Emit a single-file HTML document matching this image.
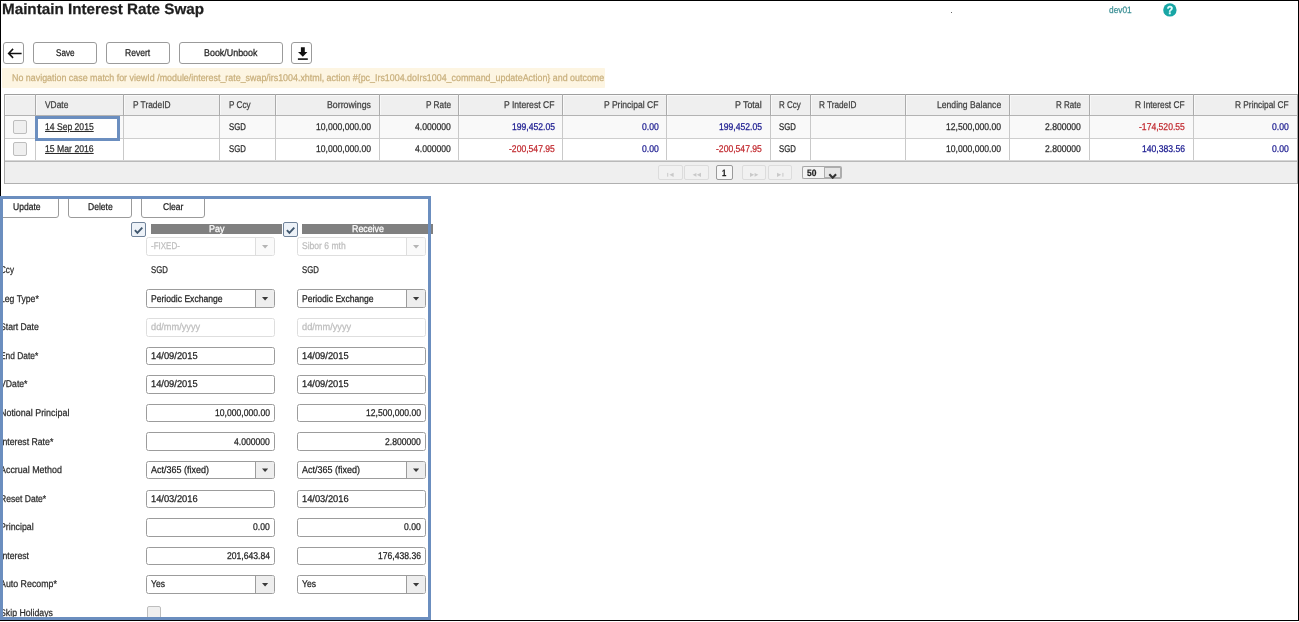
<!DOCTYPE html>
<html lang="en"><head><meta charset="utf-8"><title>Maintain Interest Rate Swap</title>
<style>
html,body{margin:0;padding:0;background:#fff;}
body{width:1299px;height:622px;position:relative;overflow:hidden;font-family:"Liberation Sans",sans-serif;}
h1{margin:0;font-weight:bold;}
#root{position:absolute;left:0;top:0;width:1299px;height:622px;will-change:transform;overflow:hidden;}
.b{position:absolute;display:block;margin:0;padding:0;}
.t{-webkit-text-stroke:0.25px;text-rendering:geometricPrecision;position:absolute;display:block;margin:0;padding:0;white-space:nowrap;transform-origin:0 0;font-family:"Liberation Sans",sans-serif;}
button.btn{border:1px solid #9b9b9b;border-radius:3px;background:#fff;box-sizing:border-box;font-family:"Liberation Sans",sans-serif;overflow:hidden;}
button.btn svg{position:absolute;left:0;top:0;}
.b svg{position:absolute;left:0;top:0;}
svg.b{position:absolute;}
a.t{cursor:pointer;}
</style></head>
<body>
<div id="root">
<header>
<h1 class="t " style="left:2.00px;top:0px;font-size:15px;line-height:20px;color:#1e1e1e;transform:scaleX(1.0140);font-weight:bold;">Maintain Interest Rate Swap</h1>
<span class="t " style="left:1109.00px;top:4px;font-size:9.2px;line-height:12px;color:#3b8f95;transform:scaleX(0.9056);">dev01</span>
<svg class="b" style="left:1163px;top:3px" width="14" height="15" viewBox="0 0 14 15"><circle cx="6.9" cy="6.9" r="6.7" fill="#18a6a5"/><text x="6.9" y="10.9" text-anchor="middle" font-family="Liberation Sans, sans-serif" font-weight="bold" font-size="10.5" fill="#e9ffff" stroke="#e9ffff" stroke-width="0.3">?</text></svg>
<div class="b " style="left:951px;top:12px;width:1px;height:1px;background:#666;"></div>
</header>
<nav>
<button class="b btn" style="left:3px;top:42px;width:21px;height:22px;"><svg width="19" height="20" viewBox="0 0 19 20"><path d="M17.6 10.4H4.8M9.1 5.9L4.6 10.4L9.1 14.9" fill="none" stroke="#111" stroke-width="1.5"/></svg></button>
<button class="b btn" style="left:33px;top:42px;width:64px;height:22px;"><span class="t " style="left:21.80px;top:4px;font-size:9.8px;line-height:13px;color:#222;transform:scaleX(0.8282);">Save</span></button>
<button class="b btn" style="left:106px;top:42px;width:64px;height:22px;"><span class="t " style="left:18.41px;top:4px;font-size:9.8px;line-height:13px;color:#222;transform:scaleX(0.8724);">Revert</span></button>
<button class="b btn" style="left:179px;top:42px;width:104px;height:22px;"><span class="t " style="left:23.70px;top:4px;font-size:9.8px;line-height:13px;color:#222;transform:scaleX(0.9092);">Book/Unbook</span></button>
<button class="b btn" style="left:291px;top:42px;width:21px;height:22px;"><svg width="19" height="20" viewBox="0 0 19 20"><path d="M8.9 4.2h3.9v4.8h2.6L10.85 13.7 6 9h2.9z" fill="#111"/><rect x="5.9" y="15.3" width="9.9" height="1.6" fill="#111"/></svg></button>
</nav>
<div class="b msg" style="left:2px;top:68px;width:603px;height:20px;background:#fdf5e2;border-radius:1px;"></div>
<span class="t " style="left:11.80px;top:72px;font-size:9.8px;line-height:13px;color:#c8af7c;transform:scaleX(0.9069);">No navigation case match for viewId /module/interest_rate_swap/irs1004.xhtml, action #{pc_Irs1004.doIrs1004_command_updateAction} and outcome</span>
<section class="grid">
<div class="b " style="left:4px;top:94px;width:1294px;height:90px;background:#fff;"></div>
<div class="b " style="left:4px;top:94px;width:1294px;height:22px;background:#efefef;"></div>
<div class="b " style="left:4px;top:116px;width:1294px;height:23px;background:#f9f9f9;"></div>
<div class="b " style="left:4px;top:139px;width:1294px;height:22px;background:#fff;"></div>
<div class="b " style="left:38px;top:119px;width:79px;height:19px;background:#fefefe;"></div>
<div class="b " style="left:4px;top:161px;width:1294px;height:23px;background:#efefef;"></div>
<div class="b " style="left:4px;top:94px;width:1294px;height:1px;background:#9f9f9f;"></div>
<div class="b " style="left:5px;top:95px;width:1292px;height:1px;background:#fafafa;"></div>
<div class="b " style="left:4px;top:115px;width:1294px;height:1px;background:#b3b3b3;"></div>
<div class="b " style="left:4px;top:138px;width:1294px;height:1px;background:#cecece;"></div>
<div class="b " style="left:4px;top:160px;width:1294px;height:1px;background:#d6d6d6;"></div>
<div class="b " style="left:4px;top:161px;width:1294px;height:1px;background:#b9b9b9;"></div>
<div class="b " style="left:4px;top:183px;width:1294px;height:1px;background:#b0b0b0;"></div>
<div class="b " style="left:4px;top:94px;width:1px;height:90px;background:#a8a8a8;"></div>
<div class="b " style="left:5px;top:95px;width:1px;height:20px;background:#f8f8f8;"></div>
<div class="b " style="left:35px;top:94px;width:1px;height:22px;background:#ababab;"></div>
<div class="b " style="left:36px;top:95px;width:1px;height:20px;background:#f8f8f8;"></div>
<div class="b " style="left:35px;top:116px;width:1px;height:44px;background:#c9c9c9;"></div>
<div class="b " style="left:123px;top:94px;width:1px;height:22px;background:#ababab;"></div>
<div class="b " style="left:124px;top:95px;width:1px;height:20px;background:#f8f8f8;"></div>
<div class="b " style="left:123px;top:116px;width:1px;height:44px;background:#c9c9c9;"></div>
<div class="b " style="left:219px;top:94px;width:1px;height:22px;background:#ababab;"></div>
<div class="b " style="left:220px;top:95px;width:1px;height:20px;background:#f8f8f8;"></div>
<div class="b " style="left:219px;top:116px;width:1px;height:44px;background:#c9c9c9;"></div>
<div class="b " style="left:275px;top:94px;width:1px;height:22px;background:#ababab;"></div>
<div class="b " style="left:276px;top:95px;width:1px;height:20px;background:#f8f8f8;"></div>
<div class="b " style="left:275px;top:116px;width:1px;height:44px;background:#c9c9c9;"></div>
<div class="b " style="left:379px;top:94px;width:1px;height:22px;background:#ababab;"></div>
<div class="b " style="left:380px;top:95px;width:1px;height:20px;background:#f8f8f8;"></div>
<div class="b " style="left:379px;top:116px;width:1px;height:44px;background:#c9c9c9;"></div>
<div class="b " style="left:458px;top:94px;width:1px;height:22px;background:#ababab;"></div>
<div class="b " style="left:459px;top:95px;width:1px;height:20px;background:#f8f8f8;"></div>
<div class="b " style="left:458px;top:116px;width:1px;height:44px;background:#c9c9c9;"></div>
<div class="b " style="left:562px;top:94px;width:1px;height:22px;background:#ababab;"></div>
<div class="b " style="left:563px;top:95px;width:1px;height:20px;background:#f8f8f8;"></div>
<div class="b " style="left:562px;top:116px;width:1px;height:44px;background:#c9c9c9;"></div>
<div class="b " style="left:666px;top:94px;width:1px;height:22px;background:#ababab;"></div>
<div class="b " style="left:667px;top:95px;width:1px;height:20px;background:#f8f8f8;"></div>
<div class="b " style="left:666px;top:116px;width:1px;height:44px;background:#c9c9c9;"></div>
<div class="b " style="left:770px;top:94px;width:1px;height:22px;background:#ababab;"></div>
<div class="b " style="left:771px;top:95px;width:1px;height:20px;background:#f8f8f8;"></div>
<div class="b " style="left:770px;top:116px;width:1px;height:44px;background:#c9c9c9;"></div>
<div class="b " style="left:810px;top:94px;width:1px;height:22px;background:#ababab;"></div>
<div class="b " style="left:811px;top:95px;width:1px;height:20px;background:#f8f8f8;"></div>
<div class="b " style="left:810px;top:116px;width:1px;height:44px;background:#c9c9c9;"></div>
<div class="b " style="left:905px;top:94px;width:1px;height:22px;background:#ababab;"></div>
<div class="b " style="left:906px;top:95px;width:1px;height:20px;background:#f8f8f8;"></div>
<div class="b " style="left:905px;top:116px;width:1px;height:44px;background:#c9c9c9;"></div>
<div class="b " style="left:1009px;top:94px;width:1px;height:22px;background:#ababab;"></div>
<div class="b " style="left:1010px;top:95px;width:1px;height:20px;background:#f8f8f8;"></div>
<div class="b " style="left:1009px;top:116px;width:1px;height:44px;background:#c9c9c9;"></div>
<div class="b " style="left:1089px;top:94px;width:1px;height:22px;background:#ababab;"></div>
<div class="b " style="left:1090px;top:95px;width:1px;height:20px;background:#f8f8f8;"></div>
<div class="b " style="left:1089px;top:116px;width:1px;height:44px;background:#c9c9c9;"></div>
<div class="b " style="left:1193px;top:94px;width:1px;height:22px;background:#ababab;"></div>
<div class="b " style="left:1194px;top:95px;width:1px;height:20px;background:#f8f8f8;"></div>
<div class="b " style="left:1193px;top:116px;width:1px;height:44px;background:#c9c9c9;"></div>
<div class="b " style="left:1297px;top:94px;width:1px;height:90px;background:#a8a8a8;"></div>
<span class="t " style="left:44.60px;top:99px;font-size:9.8px;line-height:13px;color:#3e3e3e;transform:scaleX(0.8554);">VDate</span>
<span class="t " style="left:132.60px;top:99px;font-size:9.8px;line-height:13px;color:#3e3e3e;transform:scaleX(0.8534);">P TradeID</span>
<span class="t " style="left:228.50px;top:99px;font-size:9.8px;line-height:13px;color:#3e3e3e;transform:scaleX(0.8320);">P Ccy</span>
<span class="t " style="left:326.60px;top:99px;font-size:9.8px;line-height:13px;color:#3e3e3e;transform:scaleX(0.8976);">Borrowings</span>
<span class="t " style="left:425.50px;top:99px;font-size:9.8px;line-height:13px;color:#3e3e3e;transform:scaleX(0.8394);">P Rate</span>
<span class="t " style="left:504.20px;top:99px;font-size:9.8px;line-height:13px;color:#3e3e3e;transform:scaleX(0.8757);">P Interest CF</span>
<span class="t " style="left:604.00px;top:99px;font-size:9.8px;line-height:13px;color:#3e3e3e;transform:scaleX(0.8710);">P Principal CF</span>
<span class="t " style="left:735.10px;top:99px;font-size:9.8px;line-height:13px;color:#3e3e3e;transform:scaleX(0.9018);">P Total</span>
<span class="t " style="left:779.20px;top:99px;font-size:9.8px;line-height:13px;color:#3e3e3e;transform:scaleX(0.8134);">R Ccy</span>
<span class="t " style="left:819.00px;top:99px;font-size:9.8px;line-height:13px;color:#3e3e3e;transform:scaleX(0.8374);">R TradeID</span>
<span class="t " style="left:937.10px;top:99px;font-size:9.8px;line-height:13px;color:#3e3e3e;transform:scaleX(0.8792);">Lending Balance</span>
<span class="t " style="left:1056.20px;top:99px;font-size:9.8px;line-height:13px;color:#3e3e3e;transform:scaleX(0.8196);">R Rate</span>
<span class="t " style="left:1135.20px;top:99px;font-size:9.8px;line-height:13px;color:#3e3e3e;transform:scaleX(0.8512);">R Interest CF</span>
<span class="t " style="left:1234.80px;top:99px;font-size:9.8px;line-height:13px;color:#3e3e3e;transform:scaleX(0.8485);">R Principal CF</span>
<div class="b chk" style="left:13px;top:120.19999999999999px;width:14px;height:14px;background:#efefef;border:1px solid #bdbdbd;border-radius:2px;box-sizing:border-box;"></div>
<a class="t " style="left:44.60px;top:121px;font-size:9.8px;line-height:13px;color:#2b2b2b;transform:scaleX(0.8761);text-decoration:underline;">14 Sep 2015</a>
<span class="t " style="left:228.50px;top:121px;font-size:9.8px;line-height:13px;color:#2b2b2b;transform:scaleX(0.7949);">SGD</span>
<span class="t " style="left:315.62px;top:121px;font-size:9.8px;line-height:13px;color:#2b2b2b;transform:scaleX(0.8773);">10,000,000.00</span>
<span class="t " style="left:414.64px;top:121px;font-size:9.8px;line-height:13px;color:#2b2b2b;transform:scaleX(0.8773);">4.000000</span>
<span class="t " style="left:511.57px;top:121px;font-size:9.8px;line-height:13px;color:#17178e;transform:scaleX(0.8773);">199,452.05</span>
<span class="t " style="left:641.67px;top:121px;font-size:9.8px;line-height:13px;color:#17178e;transform:scaleX(0.8773);">0.00</span>
<span class="t " style="left:718.77px;top:121px;font-size:9.8px;line-height:13px;color:#17178e;transform:scaleX(0.8773);">199,452.05</span>
<span class="t " style="left:779.20px;top:121px;font-size:9.8px;line-height:13px;color:#2b2b2b;transform:scaleX(0.7949);">SGD</span>
<span class="t " style="left:946.32px;top:121px;font-size:9.8px;line-height:13px;color:#2b2b2b;transform:scaleX(0.8773);">12,500,000.00</span>
<span class="t " style="left:1045.34px;top:121px;font-size:9.8px;line-height:13px;color:#2b2b2b;transform:scaleX(0.8773);">2.800000</span>
<span class="t " style="left:1138.91px;top:121px;font-size:9.8px;line-height:13px;color:#c0272d;transform:scaleX(0.8773);">-174,520.55</span>
<span class="t " style="left:1271.67px;top:121px;font-size:9.8px;line-height:13px;color:#17178e;transform:scaleX(0.8773);">0.00</span>
<div class="b chk" style="left:13px;top:142.2px;width:14px;height:14px;background:#efefef;border:1px solid #bdbdbd;border-radius:2px;box-sizing:border-box;"></div>
<a class="t " style="left:44.60px;top:143px;font-size:9.8px;line-height:13px;color:#2b2b2b;transform:scaleX(0.8850);text-decoration:underline;">15 Mar 2016</a>
<span class="t " style="left:228.50px;top:143px;font-size:9.8px;line-height:13px;color:#2b2b2b;transform:scaleX(0.7949);">SGD</span>
<span class="t " style="left:315.62px;top:143px;font-size:9.8px;line-height:13px;color:#2b2b2b;transform:scaleX(0.8773);">10,000,000.00</span>
<span class="t " style="left:414.64px;top:143px;font-size:9.8px;line-height:13px;color:#2b2b2b;transform:scaleX(0.8773);">4.000000</span>
<span class="t " style="left:508.71px;top:143px;font-size:9.8px;line-height:13px;color:#c0272d;transform:scaleX(0.8773);">-200,547.95</span>
<span class="t " style="left:641.67px;top:143px;font-size:9.8px;line-height:13px;color:#17178e;transform:scaleX(0.8773);">0.00</span>
<span class="t " style="left:715.91px;top:143px;font-size:9.8px;line-height:13px;color:#c0272d;transform:scaleX(0.8773);">-200,547.95</span>
<span class="t " style="left:779.20px;top:143px;font-size:9.8px;line-height:13px;color:#2b2b2b;transform:scaleX(0.7949);">SGD</span>
<span class="t " style="left:946.32px;top:143px;font-size:9.8px;line-height:13px;color:#2b2b2b;transform:scaleX(0.8773);">10,000,000.00</span>
<span class="t " style="left:1045.34px;top:143px;font-size:9.8px;line-height:13px;color:#2b2b2b;transform:scaleX(0.8773);">2.800000</span>
<span class="t " style="left:1141.77px;top:143px;font-size:9.8px;line-height:13px;color:#17178e;transform:scaleX(0.8773);">140,383.56</span>
<span class="t " style="left:1271.67px;top:143px;font-size:9.8px;line-height:13px;color:#17178e;transform:scaleX(0.8773);">0.00</span>
<div class="b " style="left:35px;top:116px;width:85px;height:25px;border:3px solid #6b8ebf;box-sizing:border-box;"></div>
<div class="b " style="left:658px;top:165px;width:25px;height:15px;border:1px solid #dcdcdc;border-radius:2px;background:#f1f1f1;box-sizing:border-box;"><svg width="23" height="13" viewBox="0 0 23 13"><rect x="8.2" y="6.9" width="1" height="3.8" fill="#c9c9c9"/><path d="M14.6 6.7v4.2L10.4 8.8z" fill="#c9c9c9"/></svg></div>
<div class="b " style="left:684px;top:165px;width:25px;height:15px;border:1px solid #dcdcdc;border-radius:2px;background:#f1f1f1;box-sizing:border-box;"><svg width="23" height="13" viewBox="0 0 23 13"><path d="M11.4 6.9v3.8L7.6 8.8zM16 6.7v4.2L11.8 8.8z" fill="#c9c9c9"/></svg></div>
<div class="b " style="left:716px;top:165px;width:17px;height:15px;border:1px solid #9a9a9a;border-radius:2px;background:#f7f7f7;box-sizing:border-box;"></div>
<span class="t " style="left:722.37px;top:167px;font-size:9.2px;line-height:12px;color:#222;transform:scaleX(0.8337);font-weight:bold;">1</span>
<div class="b " style="left:742px;top:165px;width:24px;height:15px;border:1px solid #dcdcdc;border-radius:2px;background:#f1f1f1;box-sizing:border-box;"><svg width="22" height="13" viewBox="0 0 22 13"><path d="M7 6.7v4.2L11.2 8.8zM11.6 6.9v3.8L15.4 8.8z" fill="#c9c9c9"/></svg></div>
<div class="b " style="left:768px;top:165px;width:24px;height:15px;border:1px solid #dcdcdc;border-radius:2px;background:#f1f1f1;box-sizing:border-box;"><svg width="22" height="13" viewBox="0 0 22 13"><path d="M8 6.7v4.2L12.2 8.8z" fill="#c9c9c9"/><rect x="13.4" y="6.9" width="1" height="3.8" fill="#c9c9c9"/></svg></div>
<div class="b " style="left:802px;top:166px;width:23px;height:13px;border:1px solid #a8a8a8;border-right:none;border-radius:2px 0 0 2px;background:#f3f3f3;box-sizing:border-box;"></div>
<div class="b " style="left:824px;top:166px;width:18px;height:13px;border:2px solid #adadad;border-left-width:1px;border-radius:0 2px 2px 0;background:#e6e6e6;box-sizing:border-box;"></div>
<svg class="b" style="left:824px;top:166px" width="18" height="13" viewBox="0 0 18 13"><path d="M5.3 8.2L8.7 11.7L12.1 8.2" fill="none" stroke="#333" stroke-width="2.1"/></svg>
<span class="t " style="left:806.80px;top:167px;font-size:9.2px;line-height:12px;color:#222;transform:scaleX(0.9185);font-weight:bold;">50</span>
</section>
<section class="form">
<button class="b btn" style="left:-5px;top:196px;width:64px;height:22px;"><span class="t " style="left:17.21px;top:4px;font-size:9.8px;line-height:13px;color:#222;transform:scaleX(0.8724);">Update</span></button>
<button class="b btn" style="left:68px;top:196px;width:64px;height:22px;"><span class="t " style="left:18.64px;top:4px;font-size:9.8px;line-height:13px;color:#222;transform:scaleX(0.8724);">Delete</span></button>
<button class="b btn" style="left:141px;top:196px;width:64px;height:22px;"><span class="t " style="left:20.78px;top:4px;font-size:9.8px;line-height:13px;color:#222;transform:scaleX(0.8724);">Clear</span></button>
<div class="b chk" style="left:131px;top:222px;width:15px;height:15px;border:1px solid #70839a;border-radius:2px;background:#edf2f8;box-sizing:border-box;"><svg width="13" height="13" viewBox="0 0 13 13"><path d="M2.9 7.2L5.4 9.8L10.3 4.7" fill="none" stroke="#40576e" stroke-width="1.9"/></svg></div>
<div class="b chk" style="left:283px;top:222px;width:15px;height:15px;border:1px solid #70839a;border-radius:2px;background:#edf2f8;box-sizing:border-box;"><svg width="13" height="13" viewBox="0 0 13 13"><path d="M2.9 7.2L5.4 9.8L10.3 4.7" fill="none" stroke="#40576e" stroke-width="1.9"/></svg></div>
<div class="b " style="left:151px;top:224px;width:131px;height:10px;background:#808080;"></div>
<div class="b " style="left:302px;top:224px;width:131px;height:10px;background:#808080;"></div>
<span class="t " style="left:209.02px;top:223px;font-size:9.8px;line-height:13px;color:#fff;transform:scaleX(0.9209);">Pay</span>
<span class="t " style="left:351.54px;top:223px;font-size:9.8px;line-height:13px;color:#fff;transform:scaleX(0.9015);">Receive</span>
<span class="t " style="left:-0.50px;top:264px;font-size:9.8px;line-height:13px;color:#2b2b2b;transform:scaleX(0.8295);">Ccy</span>
<span class="t " style="left:-0.50px;top:293px;font-size:9.8px;line-height:13px;color:#2b2b2b;transform:scaleX(0.8827);">Leg Type*</span>
<span class="t " style="left:-0.50px;top:321px;font-size:9.8px;line-height:13px;color:#2b2b2b;transform:scaleX(0.8794);">Start Date</span>
<span class="t " style="left:-0.50px;top:350px;font-size:9.8px;line-height:13px;color:#2b2b2b;transform:scaleX(0.8573);">End Date*</span>
<span class="t " style="left:-0.50px;top:378px;font-size:9.8px;line-height:13px;color:#2b2b2b;transform:scaleX(0.8856);">VDate*</span>
<span class="t " style="left:-0.50px;top:407px;font-size:9.8px;line-height:13px;color:#2b2b2b;transform:scaleX(0.9100);">Notional Principal</span>
<span class="t " style="left:-0.50px;top:436px;font-size:9.8px;line-height:13px;color:#2b2b2b;transform:scaleX(0.8895);">Interest Rate*</span>
<span class="t " style="left:-0.50px;top:464px;font-size:9.8px;line-height:13px;color:#2b2b2b;transform:scaleX(0.9091);">Accrual Method</span>
<span class="t " style="left:-0.50px;top:493px;font-size:9.8px;line-height:13px;color:#2b2b2b;transform:scaleX(0.8744);">Reset Date*</span>
<span class="t " style="left:-0.50px;top:521px;font-size:9.8px;line-height:13px;color:#2b2b2b;transform:scaleX(0.8966);">Principal</span>
<span class="t " style="left:-0.50px;top:550px;font-size:9.8px;line-height:13px;color:#2b2b2b;transform:scaleX(0.8873);">Interest</span>
<span class="t " style="left:-0.50px;top:578px;font-size:9.8px;line-height:13px;color:#2b2b2b;transform:scaleX(0.9005);">Auto Recomp*</span>
<span class="t " style="left:-0.50px;top:607px;font-size:9.8px;line-height:13px;color:#2b2b2b;transform:scaleX(0.8927);">Skip Holidays</span>
<div class="b inp" style="left:146px;top:237px;width:129px;height:19px;border:1px solid #dedede;border-radius:2.5px;background:#fff;box-sizing:border-box;overflow:hidden;"><div class="b" style="left:108px;top:0;width:19px;height:17px;background:#fafafa;border-left:1px solid #dedede;"></div><svg class="b" style="left:109px;top:0" width="18" height="17" viewBox="0 0 18 17"><path d="M6 7.1h6.2L9.1 10.4z" fill="#b5b5b5"/></svg><span class="t " style="left:3.80px;top:2px;font-size:9.8px;line-height:13px;color:#bdbdbd;transform:scaleX(0.8138);">-FIXED-</span></div>
<div class="b inp" style="left:297px;top:237px;width:129px;height:19px;border:1px solid #dedede;border-radius:2.5px;background:#fff;box-sizing:border-box;overflow:hidden;"><div class="b" style="left:108px;top:0;width:19px;height:17px;background:#fafafa;border-left:1px solid #dedede;"></div><svg class="b" style="left:109px;top:0" width="18" height="17" viewBox="0 0 18 17"><path d="M6 7.1h6.2L9.1 10.4z" fill="#b5b5b5"/></svg><span class="t " style="left:3.80px;top:2px;font-size:9.8px;line-height:13px;color:#bdbdbd;transform:scaleX(0.8724);">Sibor 6 mth</span></div>
<span class="t " style="left:150.70px;top:264px;font-size:9.8px;line-height:13px;color:#2b2b2b;transform:scaleX(0.7958);">SGD</span>
<span class="t " style="left:301.70px;top:264px;font-size:9.8px;line-height:13px;color:#2b2b2b;transform:scaleX(0.7958);">SGD</span>
<div class="b inp" style="left:146px;top:289px;width:129px;height:19px;border:1px solid #9c9c9c;border-radius:2.5px;background:#fff;box-sizing:border-box;overflow:hidden;"><div class="b" style="left:108px;top:0;width:19px;height:17px;background:#eeeeee;border-left:1px solid #9c9c9c;"></div><svg class="b" style="left:109px;top:0" width="18" height="17" viewBox="0 0 18 17"><path d="M6 7.1h6.2L9.1 10.4z" fill="#3a3a3a"/></svg><span class="t " style="left:3.80px;top:3px;font-size:9.8px;line-height:13px;color:#222;transform:scaleX(0.8762);">Periodic Exchange</span></div>
<div class="b inp" style="left:297px;top:289px;width:129px;height:19px;border:1px solid #9c9c9c;border-radius:2.5px;background:#fff;box-sizing:border-box;overflow:hidden;"><div class="b" style="left:108px;top:0;width:19px;height:17px;background:#eeeeee;border-left:1px solid #9c9c9c;"></div><svg class="b" style="left:109px;top:0" width="18" height="17" viewBox="0 0 18 17"><path d="M6 7.1h6.2L9.1 10.4z" fill="#3a3a3a"/></svg><span class="t " style="left:3.80px;top:3px;font-size:9.8px;line-height:13px;color:#222;transform:scaleX(0.8762);">Periodic Exchange</span></div>
<div class="b inp" style="left:146px;top:318px;width:129px;height:19px;border:1px solid #dedede;border-radius:2.5px;background:#fff;box-sizing:border-box;overflow:hidden;"><span class="t " style="left:3.80px;top:2px;font-size:9.8px;line-height:13px;color:#bdbdbd;transform:scaleX(0.9412);">dd/mm/yyyy</span></div>
<div class="b inp" style="left:297px;top:318px;width:129px;height:19px;border:1px solid #dedede;border-radius:2.5px;background:#fff;box-sizing:border-box;overflow:hidden;"><span class="t " style="left:3.80px;top:2px;font-size:9.8px;line-height:13px;color:#bdbdbd;transform:scaleX(0.9412);">dd/mm/yyyy</span></div>
<div class="b inp" style="left:146px;top:347px;width:129px;height:18px;border:1px solid #9c9c9c;border-radius:2.5px;background:#fff;box-sizing:border-box;overflow:hidden;"><span class="t " style="left:3.80px;top:2px;font-size:9.8px;line-height:13px;color:#222;transform:scaleX(0.9501);">14/09/2015</span></div>
<div class="b inp" style="left:297px;top:347px;width:129px;height:18px;border:1px solid #9c9c9c;border-radius:2.5px;background:#fff;box-sizing:border-box;overflow:hidden;"><span class="t " style="left:3.80px;top:2px;font-size:9.8px;line-height:13px;color:#222;transform:scaleX(0.9501);">14/09/2015</span></div>
<div class="b inp" style="left:146px;top:375px;width:129px;height:19px;border:1px solid #9c9c9c;border-radius:2.5px;background:#fff;box-sizing:border-box;overflow:hidden;"><span class="t " style="left:3.80px;top:2px;font-size:9.8px;line-height:13px;color:#222;transform:scaleX(0.9501);">14/09/2015</span></div>
<div class="b inp" style="left:297px;top:375px;width:129px;height:19px;border:1px solid #9c9c9c;border-radius:2.5px;background:#fff;box-sizing:border-box;overflow:hidden;"><span class="t " style="left:3.80px;top:2px;font-size:9.8px;line-height:13px;color:#222;transform:scaleX(0.9501);">14/09/2015</span></div>
<div class="b inp" style="left:146px;top:404px;width:129px;height:18px;border:1px solid #9c9c9c;border-radius:2.5px;background:#fff;box-sizing:border-box;overflow:hidden;"><span class="t " style="left:67.92px;top:2px;font-size:9.8px;line-height:13px;color:#222;transform:scaleX(0.8773);">10,000,000.00</span></div>
<div class="b inp" style="left:297px;top:404px;width:129px;height:18px;border:1px solid #9c9c9c;border-radius:2.5px;background:#fff;box-sizing:border-box;overflow:hidden;"><span class="t " style="left:67.92px;top:2px;font-size:9.8px;line-height:13px;color:#222;transform:scaleX(0.8773);">12,500,000.00</span></div>
<div class="b inp" style="left:146px;top:432px;width:129px;height:19px;border:1px solid #9c9c9c;border-radius:2.5px;background:#fff;box-sizing:border-box;overflow:hidden;"><span class="t " style="left:87.04px;top:3px;font-size:9.8px;line-height:13px;color:#222;transform:scaleX(0.8773);">4.000000</span></div>
<div class="b inp" style="left:297px;top:432px;width:129px;height:19px;border:1px solid #9c9c9c;border-radius:2.5px;background:#fff;box-sizing:border-box;overflow:hidden;"><span class="t " style="left:87.04px;top:3px;font-size:9.8px;line-height:13px;color:#222;transform:scaleX(0.8773);">2.800000</span></div>
<div class="b inp" style="left:146px;top:461px;width:129px;height:18px;border:1px solid #9c9c9c;border-radius:2.5px;background:#fff;box-sizing:border-box;overflow:hidden;"><div class="b" style="left:108px;top:0;width:19px;height:16px;background:#eeeeee;border-left:1px solid #9c9c9c;"></div><svg class="b" style="left:109px;top:0" width="18" height="16" viewBox="0 0 18 16"><path d="M6 6.6h6.2L9.1 9.9z" fill="#3a3a3a"/></svg><span class="t " style="left:3.80px;top:2px;font-size:9.8px;line-height:13px;color:#222;transform:scaleX(0.9164);">Act/365 (fixed)</span></div>
<div class="b inp" style="left:297px;top:461px;width:129px;height:18px;border:1px solid #9c9c9c;border-radius:2.5px;background:#fff;box-sizing:border-box;overflow:hidden;"><div class="b" style="left:108px;top:0;width:19px;height:16px;background:#eeeeee;border-left:1px solid #9c9c9c;"></div><svg class="b" style="left:109px;top:0" width="18" height="16" viewBox="0 0 18 16"><path d="M6 6.6h6.2L9.1 9.9z" fill="#3a3a3a"/></svg><span class="t " style="left:3.80px;top:2px;font-size:9.8px;line-height:13px;color:#222;transform:scaleX(0.9164);">Act/365 (fixed)</span></div>
<div class="b inp" style="left:146px;top:490px;width:129px;height:18px;border:1px solid #9c9c9c;border-radius:2.5px;background:#fff;box-sizing:border-box;overflow:hidden;"><span class="t " style="left:3.80px;top:2px;font-size:9.8px;line-height:13px;color:#222;transform:scaleX(0.9501);">14/03/2016</span></div>
<div class="b inp" style="left:297px;top:490px;width:129px;height:18px;border:1px solid #9c9c9c;border-radius:2.5px;background:#fff;box-sizing:border-box;overflow:hidden;"><span class="t " style="left:3.80px;top:2px;font-size:9.8px;line-height:13px;color:#222;transform:scaleX(0.9501);">14/03/2016</span></div>
<div class="b inp" style="left:146px;top:518px;width:129px;height:19px;border:1px solid #9c9c9c;border-radius:2.5px;background:#fff;box-sizing:border-box;overflow:hidden;"><span class="t " style="left:106.17px;top:2px;font-size:9.8px;line-height:13px;color:#222;transform:scaleX(0.8773);">0.00</span></div>
<div class="b inp" style="left:297px;top:518px;width:129px;height:19px;border:1px solid #9c9c9c;border-radius:2.5px;background:#fff;box-sizing:border-box;overflow:hidden;"><span class="t " style="left:106.17px;top:2px;font-size:9.8px;line-height:13px;color:#222;transform:scaleX(0.8773);">0.00</span></div>
<div class="b inp" style="left:146px;top:547px;width:129px;height:18px;border:1px solid #9c9c9c;border-radius:2.5px;background:#fff;box-sizing:border-box;overflow:hidden;"><span class="t " style="left:79.87px;top:2px;font-size:9.8px;line-height:13px;color:#222;transform:scaleX(0.8773);">201,643.84</span></div>
<div class="b inp" style="left:297px;top:547px;width:129px;height:18px;border:1px solid #9c9c9c;border-radius:2.5px;background:#fff;box-sizing:border-box;overflow:hidden;"><span class="t " style="left:79.87px;top:2px;font-size:9.8px;line-height:13px;color:#222;transform:scaleX(0.8773);">176,438.36</span></div>
<div class="b inp" style="left:146px;top:575px;width:129px;height:19px;border:1px solid #9c9c9c;border-radius:2.5px;background:#fff;box-sizing:border-box;overflow:hidden;"><div class="b" style="left:108px;top:0;width:19px;height:17px;background:#eeeeee;border-left:1px solid #9c9c9c;"></div><svg class="b" style="left:109px;top:0" width="18" height="17" viewBox="0 0 18 17"><path d="M6 7.1h6.2L9.1 10.4z" fill="#3a3a3a"/></svg><span class="t " style="left:3.80px;top:2px;font-size:9.8px;line-height:13px;color:#222;transform:scaleX(0.8724);">Yes</span></div>
<div class="b inp" style="left:297px;top:575px;width:129px;height:19px;border:1px solid #9c9c9c;border-radius:2.5px;background:#fff;box-sizing:border-box;overflow:hidden;"><div class="b" style="left:108px;top:0;width:19px;height:17px;background:#eeeeee;border-left:1px solid #9c9c9c;"></div><svg class="b" style="left:109px;top:0" width="18" height="17" viewBox="0 0 18 17"><path d="M6 7.1h6.2L9.1 10.4z" fill="#3a3a3a"/></svg><span class="t " style="left:3.80px;top:2px;font-size:9.8px;line-height:13px;color:#222;transform:scaleX(0.8724);">Yes</span></div>
<div class="b chk" style="left:147px;top:606px;width:14px;height:14px;background:#efefef;border:1px solid #bdbdbd;border-radius:2px;box-sizing:border-box;"></div>
<div class="b frame" style="left:0px;top:196px;width:431px;height:424px;border:3px solid #6b8ebf;box-sizing:border-box;"></div>
</section>
<div class="b " style="left:0px;top:0px;width:1299px;height:1px;background:#000;"></div>
<div class="b " style="left:0px;top:0px;width:1px;height:196px;background:#000;"></div>
<div class="b " style="left:1298px;top:0px;width:1px;height:621px;background:#000;"></div>
<div class="b " style="left:0px;top:620px;width:1299px;height:1px;background:#000;"></div>
</div>
</body></html>
